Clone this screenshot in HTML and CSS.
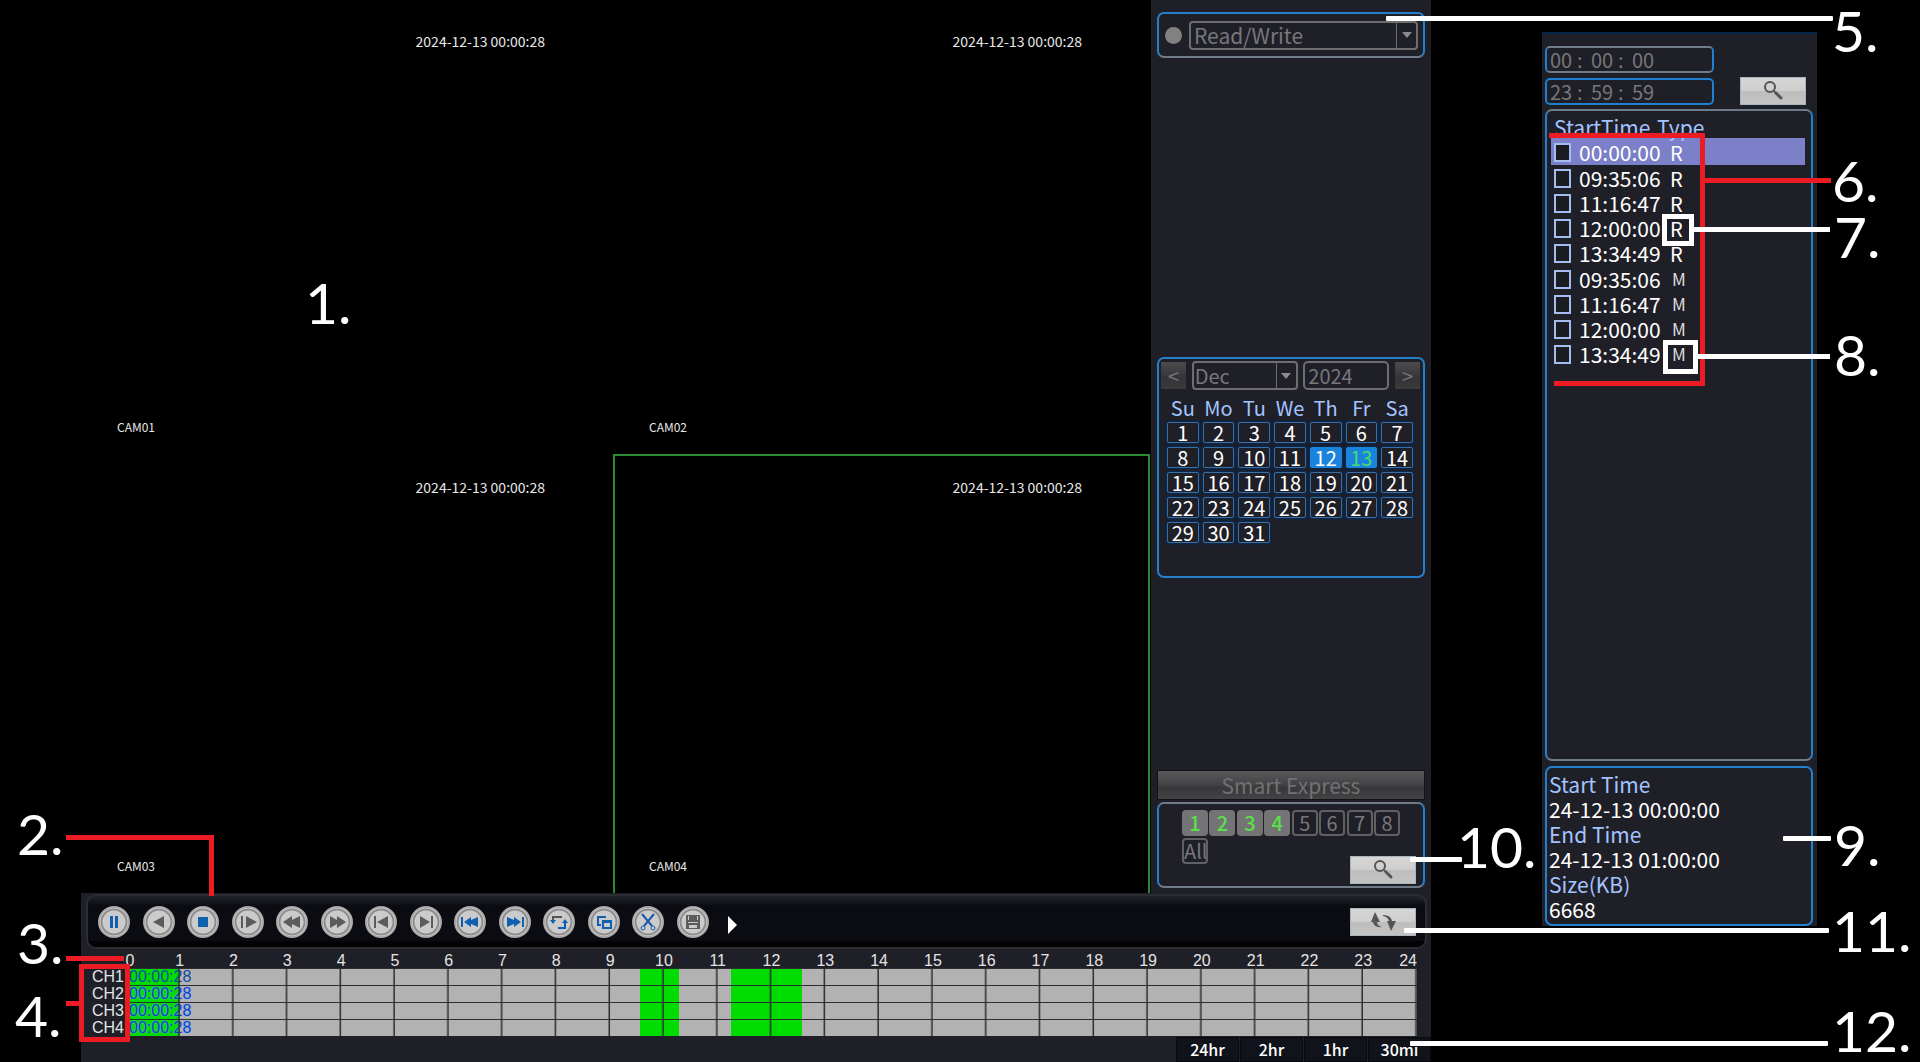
FILE: index.html
```html
<!DOCTYPE html>
<html lang="en">
<head>
<meta charset="utf-8">
<meta name="viewport" content="width=device-width, initial-scale=1">
<title>Playback</title>
<link rel="stylesheet" href="styles.css">
</head>
<body>
<main class="page">
  <section class="device">
    <div class="upper">
      <div class="views">
        <article class="view"><time class="stamp">2024-12-13 00:00:28</time><span class="cam">CAM01</span></article>
        <article class="view"><time class="stamp">2024-12-13 00:00:28</time><span class="cam">CAM02</span></article>
        <article class="view lower"><time class="stamp">2024-12-13 00:00:28</time><span class="cam">CAM03</span></article>
        <article class="view lower active"><time class="stamp">2024-12-13 00:00:28</time><span class="cam">CAM04</span></article>
      </div>
      <aside class="sidebar">
        <div class="box disk">
          <span class="dot"></span>
          <div class="pick grow">
            <select aria-label="Disk type"><option>Read/Write</option></select>
            <span class="arrow"></span>
          </div>
        </div>
        <div class="box calendar">
          <div class="month">
            <button class="step" type="button" aria-label="Previous month">&lt;</button>
            <div class="pick mon"><select aria-label="Month"><option>Dec</option></select><span class="arrow"></span></div>
            <input class="year" type="text" value="2024" aria-label="Year">
            <button class="step" type="button" aria-label="Next month">&gt;</button>
          </div>
          <table class="days">
            <thead><tr><th>Su</th><th>Mo</th><th>Tu</th><th>We</th><th>Th</th><th>Fr</th><th>Sa</th></tr></thead>
            <tbody>
              <tr><td>1</td><td>2</td><td>3</td><td>4</td><td>5</td><td>6</td><td>7</td></tr>
              <tr><td>8</td><td>9</td><td>10</td><td>11</td><td class="on">12</td><td class="on rec">13</td><td>14</td></tr>
              <tr><td>15</td><td>16</td><td>17</td><td>18</td><td>19</td><td>20</td><td>21</td></tr>
              <tr><td>22</td><td>23</td><td>24</td><td>25</td><td>26</td><td>27</td><td>28</td></tr>
              <tr><td>29</td><td>30</td><td>31</td></tr>
            </tbody>
          </table>
        </div>
        <button class="smart" type="button">Smart Express</button>
        <div class="box channels">
          <div class="chans">
            <button class="chan on" type="button">1</button>
            <button class="chan on" type="button">2</button>
            <button class="chan on" type="button">3</button>
            <button class="chan on" type="button">4</button>
            <button class="chan" type="button">5</button>
            <button class="chan" type="button">6</button>
            <button class="chan" type="button">7</button>
            <button class="chan" type="button">8</button>
          </div>
          <div class="chanfoot">
            <button class="chan" type="button">All</button>
            <button class="plate" type="button" aria-label="Search"><svg width="24" height="22" viewBox="0 0 24 22"><circle cx="9" cy="7" r="5" fill="none" stroke="#555" stroke-width="2"/><path d="M13 11l3 3" stroke="#555" stroke-width="2"/><path d="M15 13l5 5" stroke="#555" stroke-width="3" stroke-linecap="round"/></svg></button>
          </div>
        </div>
      </aside>
    </div>
    <div class="bar">
      <div class="transport">
        <button class="round blue" type="button" aria-label="Pause"><svg viewBox="0 0 20 20"><path d="M6 4h3v12H6zM11 4h3v12h-3z"/></svg></button>
        <button class="round" type="button" aria-label="Reverse play"><svg viewBox="0 0 20 20"><path d="M4 10L15 4v12z"/></svg></button>
        <button class="round blue" type="button" aria-label="Stop"><svg viewBox="0 0 20 20"><path d="M5 5h10v10H5z"/></svg></button>
        <button class="round" type="button" aria-label="Slow play"><svg viewBox="0 0 20 20"><path d="M3 4h2v12H3zM8 4l11 6-11 6z"/></svg></button>
        <button class="round" type="button" aria-label="Rewind"><svg viewBox="0 0 20 20"><path d="M1 10l9-6v4l8-4v12l-8-4v4z"/></svg></button>
        <button class="round" type="button" aria-label="Fast forward"><svg viewBox="0 0 20 20"><path d="M19 10l-9-6v4L3 4v12l7-4v4z"/></svg></button>
        <button class="round" type="button" aria-label="Previous frame"><svg viewBox="0 0 20 20"><path d="M3 4h2v12H3zM6 10l11-6v12z"/></svg></button>
        <button class="round" type="button" aria-label="Next frame"><svg viewBox="0 0 20 20"><path d="M15 4h2v12h-2zM14 10L4 4v12z"/></svg></button>
        <button class="round blue" type="button" aria-label="Previous file"><svg viewBox="0 0 20 20"><path d="M1 5h2v10H1zM4 10l7-5v3l7-3v10l-7-3v3z"/></svg></button>
        <button class="round blue" type="button" aria-label="Next file"><svg viewBox="0 0 20 20"><path d="M17 5h2v10h-2zM16 10L9 5v3L2 5v10l7-3v3z"/></svg></button>
        <button class="round blue" type="button" aria-label="Repeat"><svg viewBox="0 0 20 20"><path fill="#555" d="M3 4h10v2H5v3H3z"/><path d="M1 8h6l-3 4zM13 11h6l-3-4zM15 11h2v6H9v-2h6z"/></svg></button>
        <button class="round blue" type="button" aria-label="Full screen"><svg viewBox="0 0 20 20"><path d="M3 4h9v2H5v6h2v2H3z"/><path fill-rule="evenodd" d="M8 8h10v9H8zM10 11v4h6v-4z"/></svg></button>
        <button class="round blue" type="button" aria-label="Clip"><svg viewBox="0 0 20 20"><path d="M4 2l10 12M16 2L6 14" fill="none" stroke="#1a5ca8" stroke-width="2"/><circle cx="5" cy="16" r="2" fill="none" stroke="#1a5ca8" stroke-width="1"/><circle cx="15" cy="16" r="2" fill="none" stroke="#1a5ca8" stroke-width="1"/></svg></button>
        <button class="round" type="button" aria-label="Save"><svg viewBox="0 0 20 20"><path fill-rule="evenodd" d="M3 3h14v14H3zM5 10v1h10v-1zM6 13v3h8v-3zM5 4v4h1V4zM14 4v4h1V4z"/></svg></button>
      </div>
      <button class="more" type="button" aria-label="More"></button>
      <button class="plate" type="button" aria-label="Swap"><svg width="28" height="20" viewBox="0 0 28 20"><path fill="#555" d="M6 0l5 10H8q0 4 5 5-8 1-9-5H2z"/><path fill="#555" d="M14 3q8 0 9 6h4l-5 10-4-10h2q-1-4-6-5z"/></svg></button>
    </div>
    <div class="timeline">
      <div class="hours"><span>0</span><span>1</span><span>2</span><span>3</span><span>4</span><span>5</span><span>6</span><span>7</span><span>8</span><span>9</span><span>10</span><span>11</span><span>12</span><span>13</span><span>14</span><span>15</span><span>16</span><span>17</span><span>18</span><span>19</span><span>20</span><span>21</span><span>22</span><span>23</span><span>24</span></div>
      <div class="lane"><span class="name">CH1</span><div class="track"><i class="rec-a"></i><i class="rec-b"></i><i class="rec-c"></i><time class="now">00:00:28</time></div></div>
      <div class="lane"><span class="name">CH2</span><div class="track"><i class="rec-a"></i><i class="rec-b"></i><i class="rec-c"></i><time class="now">00:00:28</time></div></div>
      <div class="lane"><span class="name">CH3</span><div class="track"><i class="rec-a"></i><i class="rec-b"></i><i class="rec-c"></i><time class="now">00:00:28</time></div></div>
      <div class="lane"><span class="name">CH4</span><div class="track"><i class="rec-a"></i><i class="rec-b"></i><i class="rec-c"></i><time class="now">00:00:28</time></div></div>
    </div>
    <div class="scales">
      <button type="button">24hr</button>
      <button type="button">2hr</button>
      <button type="button">1hr</button>
      <button type="button">30mi</button>
    </div>
  </section>

  <section class="files">
    <div class="range">
      <div class="times">
        <div class="clock first"><input value="00" aria-label="From hour"><span>:</span><input value="00" aria-label="From minute"><span>:</span><input value="00" aria-label="From second"></div>
        <div class="clock"><input value="23" aria-label="To hour"><span>:</span><input value="59" aria-label="To minute"><span>:</span><input value="59" aria-label="To second"></div>
      </div>
      <button class="plate" type="button" aria-label="Search files"><svg width="24" height="22" viewBox="0 0 24 22"><circle cx="9" cy="7" r="5" fill="none" stroke="#555" stroke-width="2"/><path d="M13 11l3 3" stroke="#555" stroke-width="2"/><path d="M15 13l5 5" stroke="#555" stroke-width="3" stroke-linecap="round"/></svg></button>
    </div>
    <div class="box list">
      <table>
        <colgroup><col class="c-tick"><col class="c-time"><col></colgroup>
        <thead><tr><th colspan="2">StartTime</th><th>Type</th></tr></thead>
        <tbody>
          <tr class="sel"><td><input type="checkbox" aria-label="00:00:00 R"></td><td>00:00:00</td><td>R</td></tr>
          <tr><td><input type="checkbox" aria-label="09:35:06 R"></td><td>09:35:06</td><td>R</td></tr>
          <tr><td><input type="checkbox" aria-label="11:16:47 R"></td><td>11:16:47</td><td>R</td></tr>
          <tr><td><input type="checkbox" aria-label="12:00:00 R"></td><td>12:00:00</td><td>R</td></tr>
          <tr><td><input type="checkbox" aria-label="13:34:49 R"></td><td>13:34:49</td><td>R</td></tr>
          <tr class="motion"><td><input type="checkbox" aria-label="09:35:06 M"></td><td>09:35:06</td><td>M</td></tr>
          <tr class="motion"><td><input type="checkbox" aria-label="11:16:47 M"></td><td>11:16:47</td><td>M</td></tr>
          <tr class="motion"><td><input type="checkbox" aria-label="12:00:00 M"></td><td>12:00:00</td><td>M</td></tr>
          <tr class="motion"><td><input type="checkbox" aria-label="13:34:49 M"></td><td>13:34:49</td><td>M</td></tr>
        </tbody>
      </table>
    </div>
    <dl class="box detail">
      <dt>Start Time</dt><dd>24-12-13 00:00:00</dd>
      <dt>End Time</dt><dd>24-12-13 01:00:00</dd>
      <dt>Size(KB)</dt><dd>6668</dd>
    </dl>
  </section>

  <svg class="leaders" aria-hidden="true">
    <g fill="#fff">
      <rect x="1386" y="16" width="447" height="5" rx="1"/>
      <rect x="1783" y="836" width="48" height="5" rx="1"/>
      <rect x="1410" y="857" width="52" height="5" rx="1"/>
      <rect x="1404" y="928" width="425" height="5" rx="1"/>
      <rect x="1410" y="1041" width="418" height="5" rx="1"/>
    </g>
    <g fill="none" stroke="#ed1c24" stroke-width="5">
      <path d="M1549 135.500H1702.500V383.500H1554M1705 180.500H1831"/>
      <path d="M66 837.500H211.500V896M66 958.500H124M66 1003.500H80"/>
      <rect x="81.500" y="966.500" width="46" height="73"/>
    </g>
    <g fill="none" stroke="#fff" stroke-width="5">
      <path d="M1694 229.500H1830M1698 356.500H1830"/>
      <rect x="1664.500" y="216.500" width="27" height="27"/>
      <rect x="1665.500" y="342.500" width="30" height="29"/>
    </g>
  </svg>
  <span class="note n1">1.</span>
  <span class="note n2">2.</span>
  <span class="note n3">3.</span>
  <span class="note n4">4.</span>
  <span class="note n5">5.</span>
  <span class="note n6">6.</span>
  <span class="note n7">7.</span>
  <span class="note n8">8.</span>
  <span class="note n9">9.</span>
  <span class="note n10">10.</span>
  <span class="note n11">11.</span>
  <span class="note n12">12.</span>
</main>
</body>
</html>
```
FILE: styles.css
```css
* { box-sizing: border-box; }

body {
  margin: 0;
  background: #000;
  color: #fff;
  font: 21px/25px "Noto Sans CJK SC", "Noto Sans", sans-serif;
}

button, input, select {
  margin: 0;
  padding: 0;
  border: 0;
  border-radius: 0;
  background: none;
  color: inherit;
  font: inherit;
  appearance: none;
}

.page {
  position: relative;
  display: grid;
  grid-template-columns: 81fr 1350fr 111fr 275fr 103fr;
  min-height: 100vh;
  overflow: hidden;
}

/* Player */
.device {
  grid-column: 2;
  display: flex;
  flex-direction: column;
  min-width: 0;
  background: #1f1f28;
}
.upper { flex: 1; display: flex; }

.views {
  flex: 1;
  display: grid;
  grid-template-columns: 532fr 537fr;
  grid-template-rows: 454fr 439fr;
  padding-right: 1px;
  background: #000;
}
.view {
  display: flex;
  flex-direction: column;
  justify-content: space-between;
  padding: 31px 68px 17px 36px;
  font-size: 14px;
  line-height: 20px;
  color: #e8e8e8;
}
.view.lower { padding-top: 23px; }
.view.active {
  border: 2px solid #2c8a32;
  border-bottom: 0;
  padding: 21px 66px 17px 34px;
}
.stamp { align-self: flex-end; }
.cam { font-size: 12px; }

.sidebar {
  flex: none;
  width: 280px;
  display: flex;
  flex-direction: column;
  padding: 12px 6px 5px;
}
.box {
  border: 2px solid #2580cc;
  border-radius: 7px;
}
.disk {
  display: flex;
  align-items: center;
  gap: 7px;
  height: 46px;
  padding: 0 5px 0 6px;
  border-bottom-color: #6f7b88;
}
.dot { width: 17px; height: 17px; border-radius: 50%; background: #818181; }

.pick {
  display: flex;
  align-items: center;
  height: 29px;
  border: 2px solid #6e6e70;
  border-radius: 4px;
  color: #77777a;
}
.grow { flex: 1; }
.pick select { flex: 1; min-width: 0; height: 25px; padding-left: 3px; line-height: 25px; }
.arrow {
  display: grid;
  place-items: center;
  width: 20px;
  height: 25px;
  border-left: 1px solid #6e6e70;
}
.arrow::before {
  content: "";
  border: 5px solid transparent;
  border-top: 6px solid #8b8b8b;
  border-bottom: 0;
}

.calendar { height: 221px; margin-top: 299px; padding: 2px; font-size: 20px; }
.month { display: flex; align-items: center; justify-content: space-between; padding-right: 1px; }
.step {
  width: 25px;
  height: 27px;
  background: linear-gradient(#4c4c4e, #343436 60%, #3c3c3e);
  color: #77777a;
  line-height: 25px;
}
.mon { width: 106px; }
.mon select { padding-left: 1px; }
.year {
  width: 86px;
  height: 29px;
  padding-left: 3px;
  border: 2px solid #6e6e70;
  border-radius: 5px;
  color: #77777a;
}
.days {
  width: 254px;
  margin: 2px 0 0 2px;
  border-collapse: separate;
  border-spacing: 4px;
  table-layout: fixed;
}
.days th { height: 22px; padding: 0; line-height: 21px; font-weight: 400; color: #a3c4ff; }
.days td {
  height: 21px;
  padding: 0;
  border: 1px solid #386fa8;
  border-radius: 2px;
  box-shadow: 0 0 2px 1px #082b55;
  line-height: 19px;
  text-align: center;
}
.days td.on { background: #1a84dc; border-color: #1a84dc; }
.days td.rec { color: #46dc6e; }

.smart {
  height: 30px;
  margin-top: auto;
  border: 1px solid #141418;
  background: linear-gradient(#59595b, #454547 45%, #38383a 60%, #444446);
  color: #717173;
  line-height: 27px;
}
.channels {
  height: 86px;
  margin-top: 2px;
  padding: 6px 7px 1px 23px;
  border-top-color: #6f7b88;
  border-bottom-color: #6f7b88;
}
.chans { display: flex; justify-content: space-between; width: 218px; }
.chan {
  width: 26px;
  height: 26px;
  border: 2px solid #616163;
  border-radius: 4px;
  color: #77777a;
  font-size: 20px;
  line-height: 22px;
}
.chan.on { background: #747476; border-color: #747476; color: #5be04a; font-weight: 500; }
.chanfoot { display: flex; justify-content: space-between; margin-top: 2px; }
.chanfoot .plate { margin-top: 18px; }

.plate {
  display: grid;
  place-items: center;
  width: 66px;
  height: 28px;
  border: 1px solid #a9b5bd;
  background: linear-gradient(#d6d6d6, #cecece 50%, #bdbdbd 51%, #c4c4c4);
}

/* Transport bar */
.bar {
  display: flex;
  align-items: center;
  height: 55px;
  margin: 1px 4px 0 5px;
  padding: 0 9px 0 10px;
  border: 2px solid #2c2d33;
  border-radius: 10px;
  background: linear-gradient(#20252c, #0b0c12 10px, #0b0c12 44px, #030305 46px);
}
.transport { display: flex; justify-content: space-between; width: 611px; }
.round {
  display: grid;
  place-items: center;
  width: 32px;
  height: 32px;
  border: 2px solid #aaa;
  border-radius: 50%;
  background: radial-gradient(circle, #cbcbcb 11px, #8b8b8b 12px, #8b8b8b 13px, #ddd 14px);
}
.round svg { width: 20px; height: 20px; fill: #5c5c5e; }
.round.blue svg { fill: #1060b0; }
.more {
  margin: 6px 0 0 19px;
  border: 9px solid transparent;
  border-left: 9px solid #fff;
  border-right: 0;
}
.bar .plate { margin-left: auto; }

/* Timeline */
.timeline {
  padding: 0 14px 0 11px;
  font: 16px/17px "Liberation Sans", Arial, sans-serif;
  color: #e4e4e4;
}
.hours {
  display: flex;
  justify-content: space-between;
  height: 19px;
  margin: 0 -27px 0 7px;
  padding-top: 3px;
}
.hours span { flex: 0 1 54px; text-align: center; }
.hours span:first-child { padding-left: 8px; }
.hours span:last-child { padding-right: 18px; }
.lane { display: flex; height: 17px; }
.name { width: 34px; }
.track {
  position: relative;
  flex: 1;
  background: #b2b2b2;
  border-top: 1px solid #2b2d30;
}
.track::after {
  content: "";
  position: absolute;
  inset: 0;
  background: linear-gradient(to left, #2b2d30 1px, transparent 2px) 0 0 / calc(100% / 24) 100%;
}
.track i { position: absolute; top: 0; bottom: 0; background: #00dc00; }
.rec-a { left: 0; width: 4.1%; }
.rec-b { left: 39.8%; width: 3%; }
.rec-c { left: 46.9%; width: 5.5%; }
.now { position: absolute; left: 3px; top: -1px; color: #0d49a8; }
.lane:nth-child(n+3) .now { color: #0b40cc; text-shadow: 0 0 2px #7fb4ff; }

.scales { display: flex; justify-content: flex-end; gap: 1px; margin-top: 1px; }
.scales button {
  width: 63px;
  height: 25px;
  border: 1px solid #08090c;
  background: #11131a;
  font-size: 16px;
  font-weight: 500;
  line-height: 23px;
}

/* File list */
.files {
  grid-column: 4;
  align-self: start;
  margin-top: 32px;
  padding: 12px 4px 0 3px;
  border-top: 2px solid #06274c;
  background: #1f1f28;
}
.range { display: flex; justify-content: space-between; align-items: flex-end; padding-right: 7px; }
.times { display: grid; gap: 5px; font-size: 20px; }
.clock {
  display: flex;
  align-items: center;
  width: 169px;
  height: 27px;
  padding-left: 3px;
  border: 2px solid #1f7fd0;
  border-radius: 5px;
  color: #77777a;
}
.clock.first { border-top-color: #6f7b88; border-bottom-color: #6f7b88; }
.clock input { width: 24px; height: 23px; }
.clock span { width: 17px; padding-left: 3px; }

.list { height: 652px; margin-top: 4px; padding: 3px 4px; border-top-color: #6f7b88; border-bottom-color: #6f7b88; }
.list table { width: 254px; border-collapse: collapse; table-layout: fixed; }
.c-tick { width: 28px; }
.c-time { width: 78px; }
.list th { height: 24px; padding: 2px 0 0 3px; font-weight: 400; line-height: 20px; text-align: left; color: #a3c4ff; }
.list th + th { padding-left: 0; }
.list td { height: 25px; padding: 2px 0 0; line-height: 23px; white-space: nowrap; }
.list td:last-child { padding-left: 13px; font-size: 20px; }
.list .sel { background: #7b80c8; }
.list .sel td { height: 27px; }
.list .motion td { padding-top: 3px; line-height: 22px; }
.list .motion td:last-child { padding-left: 15px; font-size: 17px; color: #ddd; }
.list input {
  display: block;
  width: 17px;
  height: 19px;
  margin-left: 3px;
  border: 2px solid #a3bdf0;
  background: #1a1c22;
}

.detail { height: 160px; margin: 5px 0 0; padding: 4px 2px; }
.detail dt { color: #a3c4ff; }
.detail dd { margin: 0; }

/* Numbered callouts over the screen */
.leaders { position: absolute; inset: 0; width: 100%; height: 100%; pointer-events: none; }
.note { position: absolute; font: 57px/60px Lato, sans-serif; }
.n1 { left: 305px; top: 272px; }
.n2 { left: 17px; top: 803px; }
.n3 { left: 17px; top: 912px; }
.n4 { left: 15px; top: 985px; }
.n5 { left: 1832px; top: 0; }
.n6 { left: 1832px; top: 150px; }
.n7 { left: 1834px; top: 206px; }
.n8 { left: 1834px; top: 324px; }
.n9 { left: 1834px; top: 814px; }
.n10 { left: 1457px; top: 816px; }
.n11 { left: 1832px; top: 900px; }
.n12 { left: 1832px; top: 1000px; }
```
